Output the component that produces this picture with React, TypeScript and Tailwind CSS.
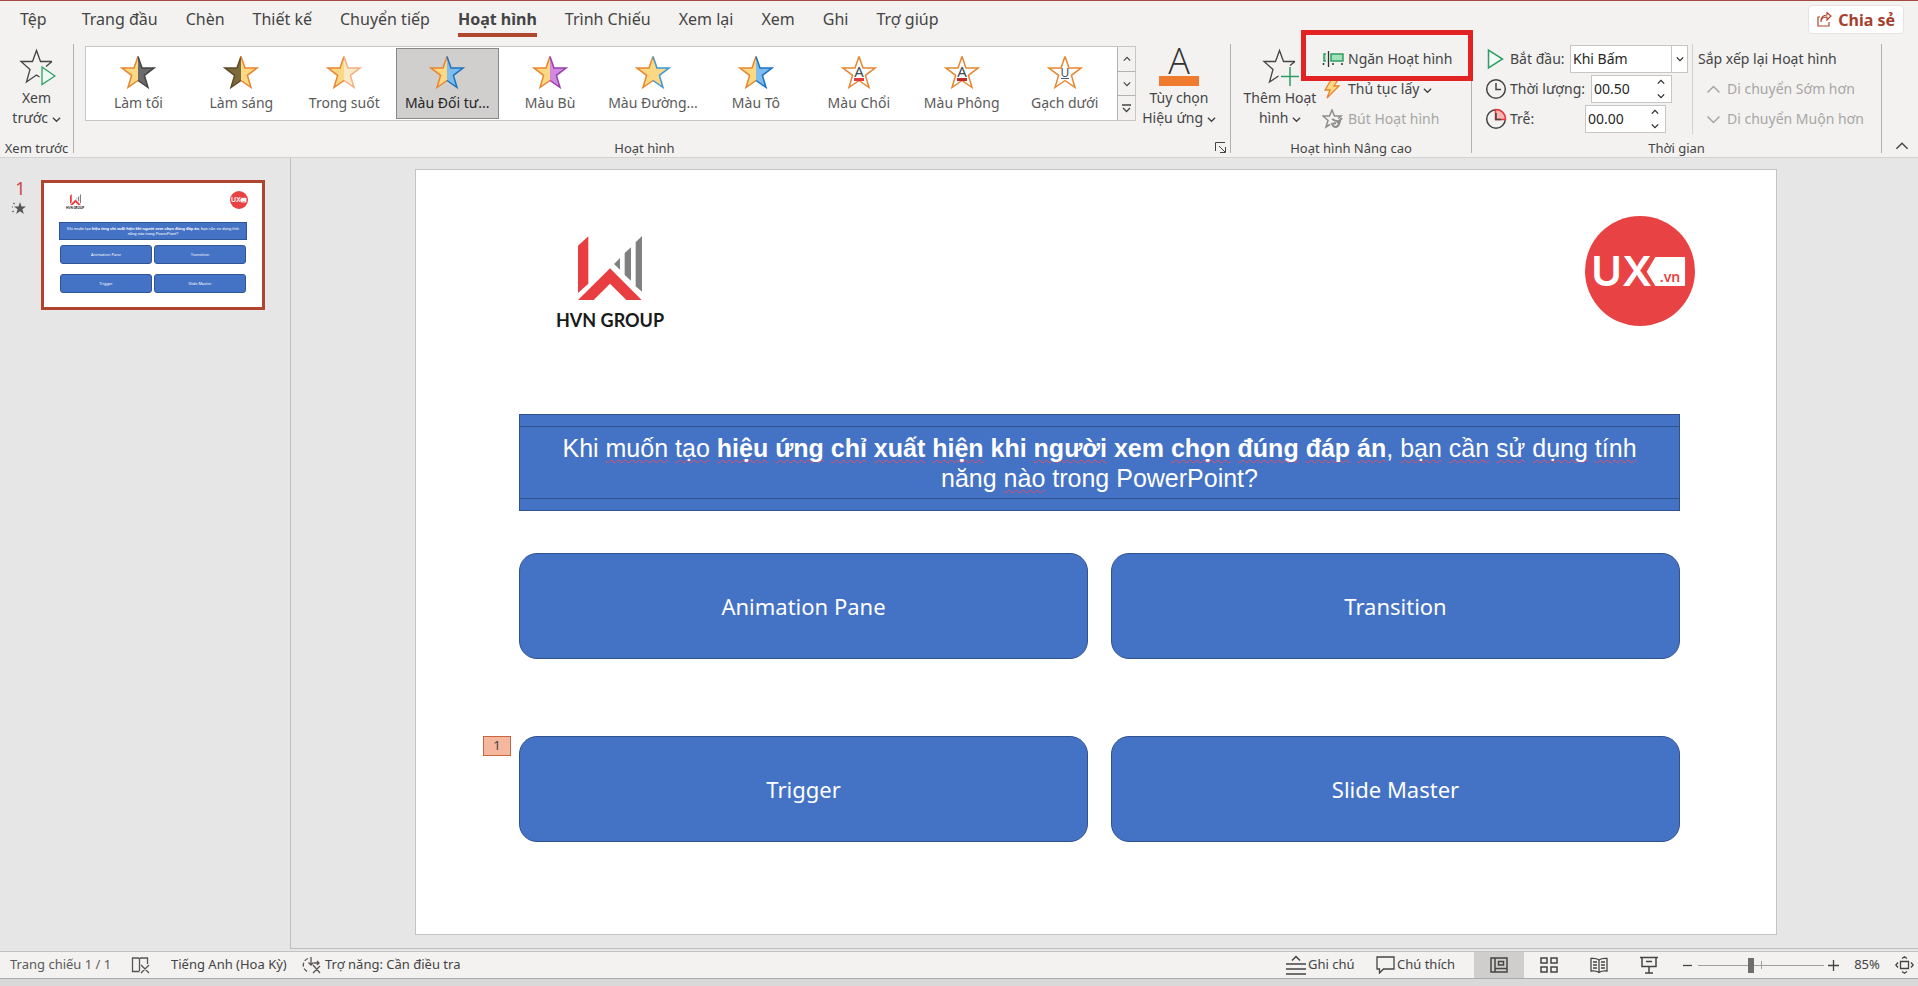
import React, { useState } from "react";

const tabs = [
  "Tệp",
  "Trang đầu",
  "Chèn",
  "Thiết kế",
  "Chuyển tiếp",
  "Hoạt hình",
  "Trình Chiếu",
  "Xem lại",
  "Xem",
  "Ghi",
  "Trợ giúp",
];

interface Effect {
  name: string;
  left: string;
  leftLine: string;
  right: string;
  rightLine: string;
  letter?: string;
  bar?: string;
}

const effects: Effect[] = [
  { name: "Làm tối", left: "#fbd884", leftLine: "#e8852e", right: "#6b6b6b", rightLine: "#444444" },
  { name: "Làm sáng", left: "#7d6a3f", leftLine: "#5c4b26", right: "#fbd884", rightLine: "#e8852e" },
  { name: "Trong suốt", left: "#fbd884", leftLine: "#e8852e", right: "#fbe9c8", rightLine: "#f0b183" },
  { name: "Màu Đối tư...", left: "#fbd884", leftLine: "#e8852e", right: "#7dbcec", rightLine: "#1c72c0" },
  { name: "Màu Bù", left: "#fbd884", leftLine: "#e8852e", right: "#d28ae0", rightLine: "#9b3fae" },
  { name: "Màu Đường...", left: "#fbd884", leftLine: "#e8852e", right: "#fbd884", rightLine: "#3c97d3" },
  { name: "Màu Tô", left: "#fbd884", leftLine: "#e8852e", right: "#7dbcec", rightLine: "#1c72c0" },
  { name: "Màu Chổi", left: "#ffffff", leftLine: "#e8852e", right: "#ffffff", rightLine: "#e8852e", letter: "A", bar: "#e03a3a" },
  { name: "Màu Phông", left: "#ffffff", leftLine: "#e8852e", right: "#ffffff", rightLine: "#e8852e", letter: "A", bar: "#c02a2a" },
  { name: "Gạch dưới", left: "#ffffff", leftLine: "#e8852e", right: "#ffffff", rightLine: "#e8852e", letter: "U", bar: "#4d5a6b" },
];

const answers = ["Animation Pane", "Transition", "Trigger", "Slide Master"];

const EffectStar = ({ effect }: { effect: Effect }) => (
  <svg width="36" height="36" viewBox="0 0 36 36" aria-hidden="true">
    <path d="M18 2.5 14 14H2l9.6 7.4L8 33.5 18 26.5Z" fill={effect.left} />
    <path d="M18 2.5 22 14h12l-9.6 7.4L28 33.5 18 26.5Z" fill={effect.right} />
    <path
      d="M18 2.5 14 14H2l9.6 7.4L8 33.5 18 26.5"
      fill="none"
      stroke={effect.leftLine}
      strokeWidth="1.5"
    />
    <path
      d="M18 2.5 22 14h12l-9.6 7.4L28 33.5 18 26.5"
      fill="none"
      stroke={effect.rightLine}
      strokeWidth="1.5"
    />
    {effect.letter && (
      <>
        <text
          x="18"
          y="23"
          textAnchor="middle"
          fontSize={effect.letter === "A" ? 15 : 12}
          fill="#3f4a57"
          fontFamily="Noto Sans, sans-serif"
        >
          {effect.letter}
        </text>
        <rect
          x={effect.letter === "A" ? 13 : 14}
          y="24"
          width={effect.letter === "A" ? 10 : 8}
          height={effect.letter === "A" ? 3 : 1}
          fill={effect.bar}
        />
      </>
    )}
  </svg>
);

const Chevron = ({ up = false, size = 10 }: { up?: boolean; size?: number }) => (
  <svg
    width={size}
    height={size}
    viewBox="0 0 10 10"
    fill="none"
    stroke="currentColor"
    strokeWidth={size > 10 ? 1 : 1.5}
    className="inline-block shrink-0"
    aria-hidden="true"
  >
    <path d={up ? "M1 7 5 3l4 4" : "M1 3l4 4 4-4"} />
  </svg>
);

const HvnMark = ({ className }: { className: string }) => (
  <svg viewBox="237 109 192 192" className={className} aria-hidden="true">
    <path d="M237 138l31-28v142l-31 28z" fill="#e83e41" />
    <path d="M237 301l96-95 95 95h-46l-49-49-49 49z" fill="#e83e41" />
    <path d="M345 193l18-18v35zM377 160l19-17v100l-19-17zM410 128l19-19v167l-19-16z" fill="#808080" />
  </svg>
);

const UxLogo = ({ className }: { className: string }) => (
  <svg viewBox="77 48 328 328" className={className} aria-label="UX.vn">
    <circle cx="241" cy="212" r="164" fill="#e94245" />
    <text x="96" y="257" fontSize="124" fontWeight="600" fill="#ffffff" fontFamily="Inter, sans-serif">
      UX
    </text>
    <path
      d="M286 169h86q5 0 5 5v79q0 5-5 5h-86l-27-44z"
      fill="#ffffff"
      stroke="#e94245"
      strokeWidth="3"
    />
    <text x="300" y="245" fontSize="42" fontWeight="600" fill="#e94245" fontFamily="Noto Sans, sans-serif">
      .vn
    </text>
  </svg>
);

// red squiggle under words the proofing tool does not know
const Typo = ({ children }: { children: React.ReactNode }) => (
  <span className="underline decoration-[#e0506a] decoration-wavy decoration-1 underline-offset-2 [text-decoration-skip-ink:none]">
    {children}
  </span>
);

const typos = (text: string) =>
  text.split(" ").map((word, i) => (
    <React.Fragment key={i}>
      {i > 0 && " "}
      <Typo>{word}</Typo>
    </React.Fragment>
  ));

const Thumbnail = () => (
  <button
    type="button"
    aria-label="Trang chiếu 1"
    className="flex h-[130px] w-[224px] flex-col border-3 border-[#b0452f] bg-white px-4"
  >
    <div className="flex h-10 w-full items-start justify-between pt-2 pl-[6px]">
      <div className="flex flex-col items-center pt-[3px]">
        <HvnMark className="h-[11px] w-[11px]" />
        <span className="mt-px font-['Lato',sans-serif] text-[3px] leading-[4px] font-bold text-black">
          HVN GROUP
        </span>
      </div>
      <UxLogo className="-mr-[2px] h-[18px] w-[18px]" />
    </div>
    <div className="flex h-4 w-full items-center justify-center bg-[#4472c4] text-center font-['Liberation_Sans',sans-serif] text-[4px] leading-[5px] text-white outline outline-[#2f5597]">
      <span>
        Khi muốn tạo <b>hiệu ứng chỉ xuất hiện khi người xem chọn đúng đáp án</b>, bạn cần sử dụng tính
        <br />
        năng nào trong PowerPoint?
      </span>
    </div>
    <div className="mt-[6px] grid w-full grid-cols-2 gap-x-[2px] gap-y-[10px]">
      {answers.map((a) => (
        <span
          key={a}
          className="flex h-[19px] items-center justify-center rounded-[3px] border border-[#2f5597] bg-[#4472c4] text-[4px] text-white"
        >
          {a}
        </span>
      ))}
    </div>
  </button>
);

interface SpinnerProps {
  id: string;
  value: string;
  onChange: (value: string) => void;
}

const Spinner = ({ id, value, onChange }: SpinnerProps) => {
  const step = (by: number) => {
    const next = Math.max(0, Number(value) + by);
    onChange(next.toFixed(2).padStart(5, "0"));
  };
  return (
    <span className="flex h-7 w-[81px] items-center border border-[#c8c6c4] bg-white text-[#262626]">
      <input
        id={id}
        value={value}
        onChange={(e) => onChange(e.target.value)}
        className="w-[59px] pl-[2px] outline-none"
      />
      <span className="flex w-5 flex-col items-center gap-[6px]">
        <button type="button" aria-label="Tăng" className="flex" onClick={() => step(0.25)}>
          <Chevron up size={8} />
        </button>
        <button type="button" aria-label="Giảm" className="flex" onClick={() => step(-0.25)}>
          <Chevron size={8} />
        </button>
      </span>
    </span>
  );
};

const Ribbon = () => {
  const [picked, setPicked] = useState("Màu Đối tư...");
  const [duration, setDuration] = useState("00.50");
  const [delay, setDelay] = useState("00.00");

  return (
    <div className="flex h-[120px] border-b border-[#d2d2d2] bg-[#f3f2f1] pt-[6px] pb-1 text-sm text-[#444444]">
      {/* preview */}
      <section className="flex w-[74px] shrink-0 flex-col border-r border-[#b3b0ad]">
        <button type="button" className="flex flex-col items-center pt-1 leading-5">
          <svg width="38" height="38" viewBox="0 0 38 38" fill="none" className="mb-[2px]" aria-hidden="true">
            <path
              d="M34 13.5H22.5L18.5 2.500l-4 11H3l9 8L8.500 34l10-7 3 2M34 13.500l-6 5"
              stroke="#444444"
              strokeWidth="1.300"
            />
            <path d="M24 19v17.500L37 28z" stroke="#2e9e62" strokeWidth="1.300" fill="#eef7f1" />
          </svg>
          <span>Xem</span>
          <span>
            trước <Chevron size={9} />
          </span>
        </button>
        <h2 className="mt-auto text-center text-[13px] leading-[10px]">Xem trước</h2>
      </section>

      {/* animation gallery */}
      <section className="flex min-w-0 flex-1 flex-col border-r border-[#b3b0ad]">
        <div className="flex pr-2 pl-[11px]">
          <div className="mt-[2px] flex h-[75px] min-w-0 flex-1 border border-[#c8c6c4] bg-white">
            <div className="flex min-w-0 flex-1 p-px">
              {effects.map((effect) => (
                <button
                  key={effect.name}
                  type="button"
                  onClick={() => setPicked(effect.name)}
                  className={
                    picked === effect.name
                      ? "flex min-w-0 flex-1 flex-col items-center border border-[#8a8886] bg-[#d0cfce] pt-[5px] text-[#262626]"
                      : "flex min-w-0 flex-1 flex-col items-center border border-transparent pt-[5px] text-[#5a5a5a]"
                  }
                >
                  <EffectStar effect={effect} />
                  <span className="mt-[3px] leading-5 whitespace-nowrap">{effect.name}</span>
                </button>
              ))}
            </div>
            <div className="flex w-[18px] flex-col divide-y divide-[#b3b0ad] border-l border-[#b3b0ad] bg-[#f3f2f1]">
              <button type="button" aria-label="Lên" className="flex flex-1 items-center justify-center">
                <Chevron up size={8} />
              </button>
              <button type="button" aria-label="Xuống" className="flex flex-1 items-center justify-center">
                <Chevron size={8} />
              </button>
              <button type="button" aria-label="Thêm" className="flex flex-1 items-center justify-center">
                <svg width="9" height="9" viewBox="0 0 9 9" fill="none" stroke="currentColor" strokeWidth="1.300" aria-hidden="true">
                  <path d="M0 1h9M1 4l3.500 3.500L8 4" />
                </svg>
              </button>
            </div>
          </div>
          <button type="button" className="flex w-[86px] shrink-0 flex-col items-center pt-1 leading-5">
            <svg width="40" height="38" viewBox="0 0 40 38" className="mb-[2px] overflow-visible" aria-hidden="true">
              <text
                x="20"
                y="26"
                textAnchor="middle"
                fontSize="36"
                fontWeight="300"
                fill="#333333"
                fontFamily="Open Sans, sans-serif"
              >
                A
              </text>
              <rect y="28" width="40" height="10" fill="#ef7b2f" />
            </svg>
            <span>Tùy chọn</span>
            <span className="whitespace-nowrap">
              Hiệu ứng <Chevron size={9} />
            </span>
          </button>
        </div>
        <div className="mt-auto flex items-end pr-1">
          <h2 className="flex-1 text-center text-[13px] leading-[10px]">Hoạt hình</h2>
          <button type="button" aria-label="Tùy chọn hiệu ứng khác">
            <svg width="11" height="11" viewBox="0 0 11 11" fill="none" stroke="#444444" aria-hidden="true">
              <path d="M.5 9V.5H10M4 4l6 6M10.500 5v5.500H5" />
            </svg>
          </button>
        </div>
      </section>

      {/* advanced animation */}
      <section className="flex w-[241px] shrink-0 flex-col border-r border-[#b3b0ad]">
        <div className="flex pl-2">
          <button type="button" className="flex w-[82px] shrink-0 flex-col items-center pt-1 leading-5">
            <svg width="38" height="38" viewBox="0 0 38 38" fill="none" className="mb-[2px]" aria-hidden="true">
              <path
                d="M34 13.500H22.500L18.500 2.500l-4 11H3l9 8L8.500 34l9-6M34 13.500l-5 4"
                stroke="#444444"
                strokeWidth="1.300"
              />
              <path d="M29 19v19M20 28.500h18" stroke="#2e9e62" strokeWidth="1.500" />
            </svg>
            <span className="whitespace-nowrap">Thêm Hoạt</span>
            <span>
              hình <Chevron size={9} />
            </span>
          </button>
          <div className="flex flex-col pl-px">
            <div className="relative">
              <button type="button" className="flex h-[30px] items-center gap-1 whitespace-nowrap">
                <svg width="22" height="18" viewBox="0 0 22 18" aria-hidden="true">
                  <path d="M4 4H2v7h2M9 4h12v7H9z" fill="#a5e0bd" stroke="#2e9e62" strokeWidth="1.500" />
                  <path d="M6.500 1v16" stroke="#333333" strokeWidth="1.300" />
                  <path d="M1.500 13v2M11 13v2M20 13v2" stroke="#333333" strokeWidth="1.500" />
                </svg>
                Ngăn Hoạt hình
              </button>
              {/* callout around the pane button */}
              <div className="pointer-events-none absolute -top-[14px] -left-[21px] h-[51px] w-[172px] border-5 border-[#e32223]" />
            </div>
            <button type="button" className="flex h-[30px] items-center gap-1 whitespace-nowrap">
              <svg width="22" height="20" viewBox="0 0 22 20" aria-hidden="true">
                <path d="M9 1h7l-4 6h5L5 19l3-8H3z" fill="#fbd884" stroke="#e8852e" strokeWidth="1.300" />
              </svg>
              <span>
                Thủ tục lấy <Chevron size={9} />
              </span>
            </button>
            <button type="button" disabled className="flex h-[30px] items-center gap-1 whitespace-nowrap text-[#a8a6a4]">
              <svg width="22" height="20" viewBox="0 0 22 20" fill="none" stroke="#8f8d8b" strokeWidth="1.500" aria-hidden="true">
                <path d="M8 15.500 4 18l2-6.500L1 7h6.500L10 1l2.500 6H19l-3 2.500" />
                <path d="M20 9l-5 5M10 10q4 3 8 2-1 5-4 6-3 0-4-3l4-1" strokeWidth="2" />
              </svg>
              Bút Hoạt hình
            </button>
          </div>
        </div>
        <h2 className="mt-auto text-center text-[13px] leading-[10px]">Hoạt hình Nâng cao</h2>
      </section>

      {/* timing */}
      <section className="flex w-[410px] shrink-0 flex-col border-r border-[#b3b0ad]">
        <div className="flex pl-[13px]">
          <div className="flex w-[208px] flex-col border-r border-[#d2d0ce] whitespace-nowrap">
            <div className="flex h-[30px] items-center">
              <svg width="22" height="22" viewBox="0 0 22 22" aria-hidden="true">
                <path d="M3.500 2v18l14-9z" fill="#f4faf6" stroke="#2e9e62" strokeWidth="1.500" />
              </svg>
              <label htmlFor="start" className="w-[63px] pl-[3px]">
                Bắt đầu:
              </label>
              <span className="relative flex h-7 w-[118px] items-center border border-[#c8c6c4] bg-white text-[#262626]">
                <select id="start" className="h-full w-full appearance-none pl-[2px] outline-none">
                  <option>Khi Bấm</option>
                </select>
                <span className="pointer-events-none absolute inset-y-0 right-0 flex w-4 items-center justify-center border-l border-[#c8c6c4]">
                  <Chevron size={8} />
                </span>
              </span>
            </div>
            <div className="flex h-[30px] items-center">
              <svg width="22" height="22" viewBox="0 0 22 22" fill="none" stroke="#444444" strokeWidth="1.500" aria-hidden="true">
                <circle cx="11" cy="11" r="9.300" />
                <path d="M11 5v6.500h5" />
              </svg>
              <label htmlFor="duration" className="w-[84px] pl-[3px]">
                Thời lượng:
              </label>
              <Spinner id="duration" value={duration} onChange={setDuration} />
            </div>
            <div className="flex h-[30px] items-center">
              <svg width="22" height="22" viewBox="0 0 22 22" fill="none" stroke="#444444" strokeWidth="1.500" aria-hidden="true">
                <circle cx="11" cy="11" r="9.300" />
                <path d="M10.500 1.500h.5a9.500 9.500 0 0 1 9.500 10H10.500z" fill="#fbb4b4" stroke="#e23b3b" />
                <path d="M11 5v6.500h5" />
              </svg>
              <label htmlFor="delay" className="w-[78px] pl-[3px]">
                Trễ:
              </label>
              <Spinner id="delay" value={delay} onChange={setDelay} />
            </div>
          </div>
          <div className="flex flex-col pl-[5px] whitespace-nowrap">
            <span className="flex h-[30px] items-center">Sắp xếp lại Hoạt hình</span>
            <button type="button" disabled className="flex h-[30px] items-center gap-[6px] pl-2 text-[#a8a6a4]">
              <Chevron up size={15} />
              Di chuyển Sớm hơn
            </button>
            <button type="button" disabled className="flex h-[30px] items-center gap-[6px] pl-2 text-[#a8a6a4]">
              <Chevron size={15} />
              Di chuyển Muộn hơn
            </button>
          </div>
        </div>
        <h2 className="mt-auto text-center text-[13px] leading-[10px]">Thời gian</h2>
      </section>

      <button type="button" aria-label="Thu gọn dải băng" className="mt-auto flex w-9 shrink-0 justify-center pl-1">
        <Chevron up size={14} />
      </button>
    </div>
  );
};

const StatusBar = () => {
  const [zoom, setZoom] = useState(85);
  return (
    <footer className="flex h-7 items-center border-y border-t-[#c4c2c0] border-b-[#ababab] bg-[#f3f2f1] text-[13px] whitespace-nowrap text-[#444444]">
      <span className="w-[131px] pl-[10px] text-[#5a5a5a]">Trang chiếu 1 / 1</span>
      <button type="button" aria-label="Kiểm lỗi chính tả" className="w-10">
        <svg width="19" height="18" viewBox="0 0 19 18" fill="none" stroke="#555555" strokeWidth="1.300" aria-hidden="true">
          <path d="M8.500 15.500H1.500V2H7.500l1 1V15M8.500 3l1-1H16.500V8M10 9l8 8M18 9l-8 8" />
        </svg>
      </button>
      <button type="button" className="w-[131px] text-left">
        Tiếng Anh (Hoa Kỳ)
      </button>
      <button type="button" className="flex items-center gap-[3px]">
        <svg width="20" height="18" viewBox="0 0 20 18" fill="none" stroke="#555555" strokeWidth="1.300" aria-hidden="true">
          <path d="M6 2.500A7 7 0 0 0 7 16" strokeDasharray="4 2" />
          <path d="M9 1v8M6.500 6.500 9 9l2.500-2.500M12 7h5M15 5l2 2-2 2M11 9l7 8M18 10l-7 7" />
        </svg>
        Trợ năng: Cần điều tra
      </button>

      <div className="ml-auto flex items-center self-stretch">
        <button type="button" className="flex w-[90px] items-center gap-[2px]">
          <svg width="20" height="20" viewBox="0 0 20 20" fill="none" stroke="#444444" strokeWidth="1.500" aria-hidden="true">
            <path d="M0 9h20M0 14h20M0 19h20M6 5.500 10 1.500l4 4" />
          </svg>
          Ghi chú
        </button>
        <button type="button" className="flex w-[98px] items-center gap-[2px]">
          <svg width="19" height="18" viewBox="0 0 19 18" fill="none" stroke="#444444" strokeWidth="1.300" aria-hidden="true">
            <path d="M1 1h17v12H7.500L3.500 17v-4H1z" />
          </svg>
          Chú thích
        </button>
        <button type="button" aria-label="Bình thường" className="flex w-[50px] items-center justify-center self-stretch bg-[#cfcecc]">
          <svg width="18" height="16" viewBox="0 0 18 16" fill="none" stroke="#444444" strokeWidth="1.500" aria-hidden="true">
            <path d="M1 1h16v14H1zM5 1v14M5 11.500h12M8.500 4.500h5v3.500h-5z" />
          </svg>
        </button>
        <button type="button" aria-label="Bộ sắp xếp trang chiếu" className="flex w-[50px] justify-center">
          <svg width="18" height="16" viewBox="0 0 18 16" fill="none" stroke="#444444" strokeWidth="1.500" aria-hidden="true">
            <path d="M1 1h6v5H1zM11 1h6v5h-6zM1 10h6v5H1zM11 10h6v5h-6z" />
          </svg>
        </button>
        <button type="button" aria-label="Chế độ đọc" className="flex w-[50px] justify-center">
          <svg width="18" height="17" viewBox="0 0 18 17" fill="none" stroke="#444444" strokeWidth="1.300" aria-hidden="true">
            <path d="M9 3Q6 1 1 1.500V14q5-.5 8 1.500 3-2 8-1.500V1.500Q12 1 9 3v12.500M3 5h4M3 8h4M3 11h4M11 5h4M11 8h4M11 11h4" />
          </svg>
        </button>
        <button type="button" aria-label="Trình chiếu" className="flex w-[50px] justify-center">
          <svg width="18" height="18" viewBox="0 0 18 18" fill="none" stroke="#444444" strokeWidth="1.500" aria-hidden="true">
            <path d="M0 1.500h18M2 1.500v9h14v-9M6 5.500h6M9 10.500v6M5 17h8" />
          </svg>
        </button>
        <button type="button" aria-label="Thu nhỏ" className="flex w-6 justify-end">
          <svg width="15" height="11" viewBox="0 0 15 11" stroke="#444444" strokeWidth="1.300" aria-hidden="true">
            <path d="M0 5.500h9" />
          </svg>
        </button>
        <span className="relative flex">
          <span className="absolute top-[6px] left-1/2 h-2 w-px bg-[#a19f9d]" />
          <input
            type="range"
            aria-label="Thu phóng"
            min={10}
            max={190}
            value={zoom}
            onChange={(e) => setZoom(Number(e.target.value))}
            className="h-5 w-[126px] appearance-none bg-transparent [&::-webkit-slider-runnable-track]:h-px [&::-webkit-slider-runnable-track]:bg-[#a19f9d] [&::-webkit-slider-thumb]:-mt-[7px] [&::-webkit-slider-thumb]:h-[15px] [&::-webkit-slider-thumb]:w-[6px] [&::-webkit-slider-thumb]:appearance-none [&::-webkit-slider-thumb]:bg-[#6e6e6e]"
          />
        </span>
        <button type="button" aria-label="Phóng to" className="flex w-[23px] pl-1">
          <svg width="11" height="11" viewBox="0 0 11 11" stroke="#444444" strokeWidth="1.300" aria-hidden="true">
            <path d="M0 5.500h11M5.500 0v11" />
          </svg>
        </button>
        <button type="button" className="w-12 pr-2">
          {zoom}%
        </button>
        <button type="button" aria-label="Vừa với cửa sổ" className="pr-1">
          <svg width="19" height="18" viewBox="0 0 19 18" fill="none" stroke="#444444" strokeWidth="1.300" aria-hidden="true">
            <path d="M5.500 5.500h8v7h-8zM7 2.500 9.500.8 12 2.500M7 15.500l2.500 1.700L12 15.500M3 6.500.8 9 3 11.500M16 6.500 18.200 9 16 11.500" />
          </svg>
        </button>
      </div>
    </footer>
  );
};

const App = () => {
  const [tab, setTab] = useState("Hoạt hình");

  return (
    <div className="flex min-h-screen flex-col bg-[#e6e6e6] font-['Noto_Sans',sans-serif]">
      <header className="flex h-[38px] items-start border-t border-[#a5493f] bg-[#f3f2f1] pr-[14px] text-[#444444]">
        <nav className="flex gap-7 pl-5">
          {tabs.map((t) => (
            <button
              key={t}
              type="button"
              onClick={() => setTab(t)}
              className={
                t === tab
                  ? "h-9 border-b-4 border-[#b0472f] pt-1 text-base font-bold whitespace-nowrap"
                  : "h-9 border-b-4 border-transparent pt-1 text-base whitespace-nowrap first:mr-[7px]"
              }
            >
              {t}
            </button>
          ))}
        </nav>
        <button
          type="button"
          className="mt-1 ml-auto flex h-[29px] items-center gap-[6px] rounded-sm border border-[#e6e4e2] bg-white px-2 text-base font-bold whitespace-nowrap text-[#a5402d]"
        >
          <svg width="15" height="15" viewBox="0 0 15 15" fill="none" stroke="#b0452f" strokeWidth="1.200" aria-hidden="true">
            <path d="M3 5H1v9h11v-4M4 10q0-5 6-5V8l4-4-4-3.500V3Q4 3 4 10z" />
          </svg>
          Chia sẻ
        </button>
      </header>

      <Ribbon />

      <div className="flex flex-1">
        <aside className="flex w-[291px] shrink-0 items-start border-r border-[#bdbdbd] pt-[22px]">
          <div className="flex w-[41px] flex-col items-center">
            <span className="text-lg leading-4 text-[#d04545]">1</span>
            <svg width="14" height="13" viewBox="0 0 14 13" className="mt-[6px] mr-1" aria-hidden="true">
              <path d="M8 0l1.500 4.500H14l-3.600 2.800L11.800 12 8 9.300 4.200 12l1.400-4.700L2 4.500h4.500z" fill="#555555" />
              <path d="M1 1l2 1M0 5h1M0 10l2-1" stroke="#555555" />
            </svg>
          </div>
          <Thumbnail />
        </aside>

        <main className="flex min-w-0 flex-1 flex-col">
          <div className="flex-1 border-b border-[#bdbdbd] pt-[11px] pr-[141px] pb-3 pl-[124px]">
            <div className="aspect-[1362/766] border border-[#c3c3c3] bg-white pr-24 pl-[103px]">
              <div className="flex h-[244px] items-start justify-between pt-[46px] pl-[37px]">
                <div className="flex flex-col items-center pt-5">
                  <HvnMark className="h-16 w-16" />
                  <span className="mt-2 font-['Lato',sans-serif] text-lg leading-6 font-bold text-[#1a1a1a]">
                    HVN GROUP
                  </span>
                </div>
                <UxLogo className="-mr-[15px] h-[110px] w-[110px]" />
              </div>

              <div className="border border-[#2f528f] bg-[#4472c4] py-[11px]">
                <p className="flex h-[73px] items-center justify-center border-y border-[#2f528f] text-center font-['Liberation_Sans',sans-serif] text-[25px] leading-[30px] text-white">
                  <span>
                    Khi {typos("muốn tạo")}{" "}
                    <b>
                      {typos("hiệu ứng chỉ xuất hiện")} khi {typos("người")} xem {typos("chọn đúng đáp án")}
                    </b>
                    , {typos("bạn cần sử dụng tính")}
                    <br />
                    năng {typos("nào")} trong PowerPoint?
                  </span>
                </p>
              </div>

              <div className="mt-[42px] grid grid-cols-2 gap-x-[23px] gap-y-[77px]">
                {answers.map((a) => (
                  <div key={a} className="relative">
                    <button
                      type="button"
                      className="h-[106px] w-full rounded-[18px] border border-[#2f528f] bg-[#4472c4] text-[22px] text-white"
                    >
                      {a}
                    </button>
                    {a === "Trigger" && (
                      <span className="absolute top-0 -left-9 flex h-5 w-7 items-center justify-center border border-[#c8663f] bg-[#f5b79e] text-[13px] text-[#444444]">
                        1
                      </span>
                    )}
                  </div>
                ))}
              </div>
            </div>
          </div>
        </main>
      </div>

      <div className="h-[2px]" />
      <StatusBar />
      <div className="h-[7px] bg-[#d9d9d9]" />
    </div>
  );
};

export default App;
